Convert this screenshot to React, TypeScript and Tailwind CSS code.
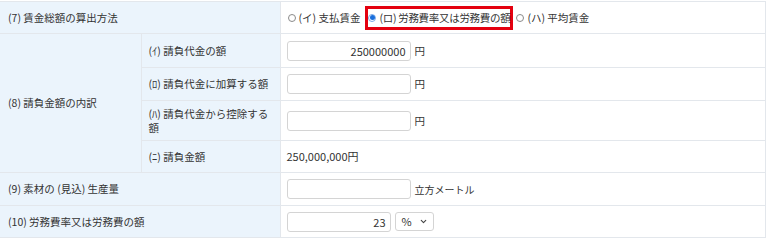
import { ChevronDown } from 'lucide-react';

const font = { fontFamily: '"Noto Sans CJK JP", "Noto Sans", sans-serif' };

const Radio = ({ checked }: { checked?: boolean }) =>
  checked ? (
    <span className="flex items-center justify-center w-[8px] h-[8px] rounded-full border border-[#7aaae8] bg-white shrink-0">
      <span className="block w-[5px] h-[5px] rounded-full bg-[#1a6fdc]" />
    </span>
  ) : (
    <span className="block w-[8px] h-[8px] rounded-full border border-[#8a8a8a] bg-white shrink-0" />
  );

const NumInput = ({ value = '', w = 'w-[124px]' }: { value?: string; w?: string }) => (
  <div
    className={`${w} h-[20px] border border-[#d4d4d4] rounded-[3px] bg-white text-right pr-[4px] leading-[18px] text-[11px] text-[#333]`}
  >
    {value}
  </div>
);

const App = () => {
  const th = 'bg-[#ebf4fc] text-[10.5px] text-[#333] text-left font-normal align-middle border-b border-[#e3e7ec]';
  const td = 'bg-white text-[10.5px] text-[#333] align-middle border-b border-[#e3e7ec] border-l border-[#d8e2ec] pl-[6px]';

  return (
    <div className="w-[768px] h-[241px] bg-white pt-[1px]" style={font}>
      <table className="w-[766px] border-collapse border-t border-r border-[#e3e7ec] table-fixed">
        <colgroup>
          <col className="w-[141px]" />
          <col className="w-[139px]" />
          <col />
        </colgroup>
        <tbody>
          {/* (7) */}
          <tr className="h-[32px]">
            <th colSpan={2} className={`${th} pl-[8px]`}>(7) 賃金総額の算出方法</th>
            <td className={td}>
              <div className="flex items-center">
                <span className="ml-[1px] mr-[3px]"><Radio /></span>
                <span>(イ) 支払賃金</span>
                <div className="ml-[5px] flex items-center h-[24px] border-[3px] border-[#e4000f]">
                  <span className="mr-[3px]"><Radio checked /></span>
                  <span className="whitespace-nowrap tracking-[-0.3px]">(ロ) 労務費率又は労務費の額</span>
                </div>
                <span className="ml-[3px] mr-[3px]"><Radio /></span>
                <span>(ハ) 平均賃金</span>
              </div>
            </td>
          </tr>

          {/* (8) */}
          <tr className="h-[34px]">
            <th rowSpan={4} className={`${th} pl-[8px] border-r border-[#dce6f0]`}>(8) 請負金額の内訳</th>
            <th className={`${th} pl-[7px] pr-[8px]`}>(ｲ) 請負代金の額</th>
            <td className={td}>
              <div className="flex items-center gap-[4px]">
                <NumInput value="250000000" />
                <span>円</span>
              </div>
            </td>
          </tr>
          <tr className="h-[33px]">
            <th className={`${th} pl-[7px] pr-[8px]`}>(ﾛ) 請負代金に加算する額</th>
            <td className={td}>
              <div className="flex items-center gap-[4px]">
                <NumInput />
                <span>円</span>
              </div>
            </td>
          </tr>
          <tr className="h-[40px]">
            <th className={`${th} pl-[7px] pr-[8px] leading-[14px]`}>(ﾊ) 請負代金から控除する額</th>
            <td className={td}>
              <div className="flex items-center gap-[4px]">
                <NumInput />
                <span>円</span>
              </div>
            </td>
          </tr>
          <tr className="h-[32px]">
            <th className={`${th} pl-[7px] pr-[8px]`}>(ﾆ) 請負金額</th>
            <td className={`${td} text-[11px]`}>250,000,000円</td>
          </tr>

          {/* (9) */}
          <tr className="h-[33px]">
            <th colSpan={2} className={`${th} pl-[8px]`}>(9) 素材の (見込) 生産量</th>
            <td className={td}>
              <div className="flex items-center gap-[4px]">
                <NumInput />
                <span className="text-[10px]">立方メートル</span>
              </div>
            </td>
          </tr>

          {/* (10) */}
          <tr className="h-[32px]">
            <th colSpan={2} className={`${th} pl-[8px]`}>(10) 労務費率又は労務費の額</th>
            <td className={td}>
              <div className="flex items-center gap-[4px]">
                <NumInput value="23" w="w-[104px]" />
                <div className="w-[39px] h-[19px] border border-[#d4d4d4] rounded-[3px] bg-white flex items-center justify-between pl-[6px] pr-[5px] text-[11px]">
                  <span>%</span>
                  <ChevronDown className="w-[9px] h-[9px] text-[#444]" strokeWidth={3} />
                </div>
              </div>
            </td>
          </tr>
        </tbody>
      </table>
    </div>
  );
};

export default App;
